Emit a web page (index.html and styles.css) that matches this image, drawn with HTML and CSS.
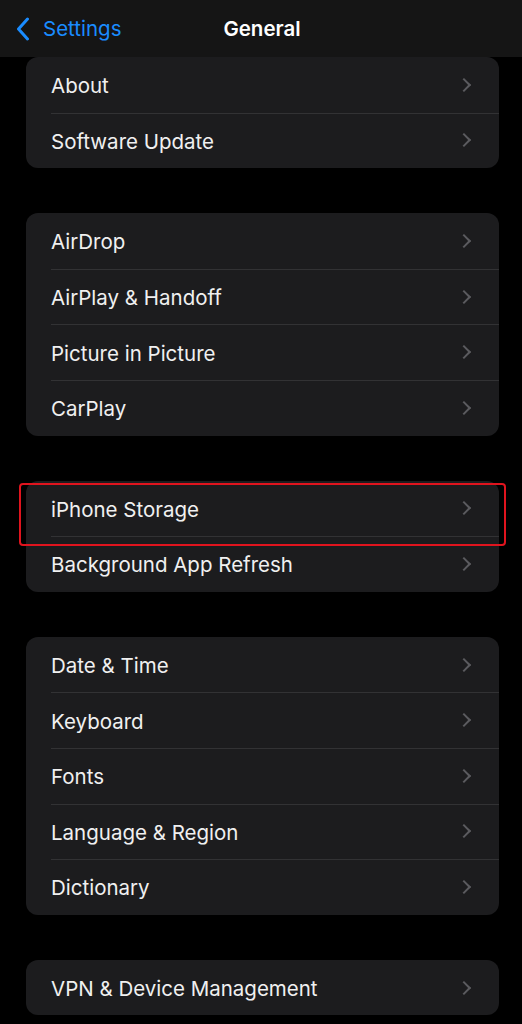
FILE: index.html
```html
<!DOCTYPE html>
<html lang="en">
<head>
    <meta charset="UTF-8">
    <meta name="viewport" content="width=device-width, initial-scale=1.0">
    <title>General</title>
    <link rel="stylesheet" href="styles.css">
</head>
<body>
    <div class="navbar">
        <a class="back" href="#">
            <svg class="back-icon" width="14" height="24" viewBox="0 0 14 24"><path d="M11.5 2 L2.5 12 L11.5 22" fill="none" stroke="#1a8cff" stroke-width="3" stroke-linecap="round" stroke-linejoin="round"/></svg>
            <span>Settings</span>
        </a>
        <div class="title">General</div>
    </div>

    <div class="list">
        <div class="group">
            <div class="row"><span>About</span><i class="chev"></i></div>
            <div class="row"><span>Software Update</span><i class="chev"></i></div>
        </div>

        <div class="group">
            <div class="row"><span>AirDrop</span><i class="chev"></i></div>
            <div class="row"><span>AirPlay &amp; Handoff</span><i class="chev"></i></div>
            <div class="row"><span>Picture in Picture</span><i class="chev"></i></div>
            <div class="row"><span>CarPlay</span><i class="chev"></i></div>
        </div>

        <div class="group highlighted">
            <div class="row"><span>iPhone Storage</span><i class="chev"></i></div>
            <div class="row"><span>Background App Refresh</span><i class="chev"></i></div>
            <div class="mark"></div>
        </div>

        <div class="group">
            <div class="row"><span>Date &amp; Time</span><i class="chev"></i></div>
            <div class="row"><span>Keyboard</span><i class="chev"></i></div>
            <div class="row"><span>Fonts</span><i class="chev"></i></div>
            <div class="row"><span>Language &amp; Region</span><i class="chev"></i></div>
            <div class="row"><span>Dictionary</span><i class="chev"></i></div>
        </div>

        <div class="group">
            <div class="row"><span>VPN &amp; Device Management</span><i class="chev"></i></div>
        </div>
    </div>
</body>
</html>
```

FILE: styles.css
```css
body {
    margin: 0;
    background-color: #000;
    font-family: Inter, "Noto Sans", sans-serif;
    color: #f0f0f0;
    overflow: hidden;
}
.navbar {
    height: 57px;
    background-color: #151515;
    display: flex;
    align-items: center;
    position: relative;
}
.back {
    display: flex;
    align-items: center;
    gap: 13px;
    padding-left: 16px;
    color: #1a8cff;
    text-decoration: none;
    font-size: 20.5px;
}
.title {
    position: absolute;
    left: 0;
    right: 0;
    top: 0;
    line-height: 57px;
    text-align: center;
    font-size: 20.5px;
    font-weight: 600;
    color: #fff;
    pointer-events: none;
    padding-left: 2px;
}
.list {
    display: flex;
    flex-direction: column;
    gap: 45px;
    padding: 0 23px 0 26px;
}
.group {
    background-color: #1c1c1e;
    border-radius: 12px;
    position: relative;
}
.row {
    height: 55.6px;
    display: flex;
    align-items: center;
    justify-content: space-between;
    padding: 0 28px 0 25px;
    font-size: 20.5px;
    position: relative;
}
.row span {
    padding-top: 2px;
}
.row + .row::before {
    content: "";
    position: absolute;
    top: 0;
    left: 25px;
    right: 0;
    height: 1px;
    background-color: #323234;
}
.chev {
    width: 8px;
    height: 8px;
    border-top: 2px solid #5b5b5f;
    border-right: 2px solid #5b5b5f;
    transform: rotate(45deg);
    margin-right: 2px;
}
.mark {
    position: absolute;
    left: -7px;
    right: -7px;
    top: 2px;
    height: 59px;
    border: 2px solid #e0141e;
    border-radius: 4px;
}
```
